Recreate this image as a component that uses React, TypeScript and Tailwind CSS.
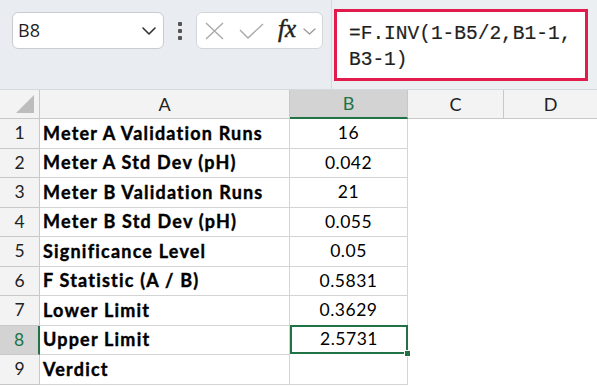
const rows = [
  { label: "Meter A Validation Runs", value: "16" },
  { label: "Meter A Std Dev (pH)", value: "0.042" },
  { label: "Meter B Validation Runs", value: "21" },
  { label: "Meter B Std Dev (pH)", value: "0.055" },
  { label: "Significance Level", value: "0.05" },
  { label: "F Statistic (A / B)", value: "0.5831" },
  { label: "Lower Limit", value: "0.3629" },
  { label: "Upper Limit", value: "2.5731" },
  { label: "Verdict", value: "" },
];

const cellFont = { fontFamily: "Lato, 'Noto Sans', sans-serif" };

function Chevron({ w, h, color, stroke }: { w: number; h: number; color: string; stroke: number }) {
  return (
    <svg width={w} height={h} viewBox={`0 0 ${w} ${h}`} fill="none">
      <path d={`M1 1 L${w / 2} ${h - 1} L${w - 1} 1`} stroke={color} strokeWidth={stroke} strokeLinecap="round" strokeLinejoin="round" />
    </svg>
  );
}

export default function App() {
  return (
    <div className="w-[597px] h-[386px] overflow-hidden bg-white relative" style={cellFont}>
      {/* formula bar */}
      <div className="h-[90px] flex bg-[#e9edf1] border-b border-[#d6d9dc]">
        <div className="w-[331px] flex items-start pt-[12px] pl-[12px]">
          <div className="w-[152px] h-[37px] bg-white rounded-[6px] border border-[#c9ccd0] flex items-center justify-between pl-[5px] pr-[7px]">
            <span className="text-[18px] text-[#1f1f1f]" style={{ fontFamily: "'Open Sans', sans-serif" }}>B8</span>
            <Chevron w={14} h={8} color="#333" stroke={1.6} />
          </div>
          <div className="w-[32px] h-[37px] flex flex-col items-center justify-center gap-[3px]">
            <span className="w-[4px] h-[4px] rounded-[1px] bg-[#555]" />
            <span className="w-[4px] h-[4px] rounded-[1px] bg-[#555]" />
            <span className="w-[4px] h-[4px] rounded-[1px] bg-[#555]" />
          </div>
          <div className="w-[127px] h-[37px] bg-white rounded-[6px] border border-[#d2d5d9] flex items-center pl-[8px]">
            <svg width="19" height="18" viewBox="0 0 19 18" fill="none">
              <path d="M1 1 L18 17 M18 1 L1 17" stroke="#a9a9a9" strokeWidth="1.4" />
            </svg>
            <svg width="25" height="16" viewBox="0 0 25 16" className="ml-[15px]" fill="none">
              <path d="M1 7 L9 15 L24 1" stroke="#a9a9a9" strokeWidth="1.4" />
            </svg>
            <span
              className="ml-[14px] text-[25px] italic text-[#222] leading-none -mt-[4px] [-webkit-text-stroke:0.5px_#222]"
              style={{ fontFamily: "'Liberation Serif', serif" }}
            >
              fx
            </span>
            <span className="ml-[7px] mt-[2px]">
              <Chevron w={13} h={7} color="#9a9a9a" stroke={1.3} />
            </span>
          </div>
        </div>
        <div className="flex-1 border-l border-[#d6d9dc] bg-[#eceff2] pl-[2px] pt-[9px]">
          <div
            className="w-[254px] h-[72px] border-[3px] border-[#e11b4c] bg-white pl-[12px] pt-[9px] text-[19.5px] leading-[26px] text-[#1f1f1f] [-webkit-text-stroke:0.2px_#1f1f1f]"
            style={{ fontFamily: "'Liberation Mono', monospace" }}
          >
            =F.INV(1-B5/2,B1-1,
            <br />
            B3-1)
          </div>
        </div>
      </div>

      {/* grid */}
      <div className="grid grid-cols-[40px_250px_118px_96px_1fr]">
        <div className="h-[29px] bg-[#f3f3f3] border-r border-b border-[#c8c8c8] relative">
          <div className="absolute right-[5px] bottom-[5px] w-0 h-0 border-l-[18px] border-l-transparent border-b-[18px] border-b-[#bdbdbd]" />
        </div>
        <div className="h-[29px] bg-[#f3f3f3] border-r border-b border-[#c8c8c8] flex items-center justify-center text-[18px] text-[#222]">A</div>
        <div className="h-[29px] bg-[#d3d3d3] border-r border-b-[2px] border-b-[#217346] border-r-[#c8c8c8] flex items-center justify-center text-[18px] text-[#217346]">B</div>
        <div className="h-[29px] bg-[#f3f3f3] border-r border-b border-[#c8c8c8] flex items-center justify-center text-[18px] text-[#222]">C</div>
        <div className="h-[29px] bg-[#f3f3f3] border-b border-[#c8c8c8] flex items-center justify-center text-[18px] text-[#222]">D</div>

        {rows.map((r, i) => {
          const sel = i === 7;
          return [
            <div
              key={`h${i}`}
              className={
                sel
                  ? "h-[29.5px] bg-[#d3d3d3] border-r-[2px] border-r-[#217346] border-b border-b-[#c8c8c8] flex items-center justify-center text-[17.5px] text-[#217346]"
                  : "h-[29.5px] bg-[#f3f3f3] border-r border-b border-[#c8c8c8] flex items-center justify-center text-[17.5px] text-[#222]"
              }
            >
              {i + 1}
            </div>,
            <div
              key={`a${i}`}
              className="h-[29.5px] border-r border-b border-[#d4d4d4] flex items-center pl-[3px] text-[18px] tracking-[1.2px] font-bold text-black whitespace-nowrap [-webkit-text-stroke:0.4px_black]"
            >
              {r.label}
            </div>,
            <div
              key={`b${i}`}
              className={
                sel
                  ? "h-[29.5px] relative border-2 border-[#217346] -mt-[1px] flex items-center justify-center text-[17.5px] tracking-[0.5px] text-black"
                  : "h-[29.5px] border-r border-b border-[#d4d4d4] flex items-center justify-center text-[17.5px] tracking-[0.5px] text-black"
              }
            >
              {r.value}
              {sel && (
                <span className="absolute -right-[5px] -bottom-[5px] w-[7px] h-[7px] bg-[#217346] border border-white" />
              )}
            </div>,
            <div key={`c${i}`} className="h-[29.5px]" />,
            <div key={`d${i}`} className="h-[29.5px]" />,
          ];
        })}
      </div>
    </div>
  );
}
